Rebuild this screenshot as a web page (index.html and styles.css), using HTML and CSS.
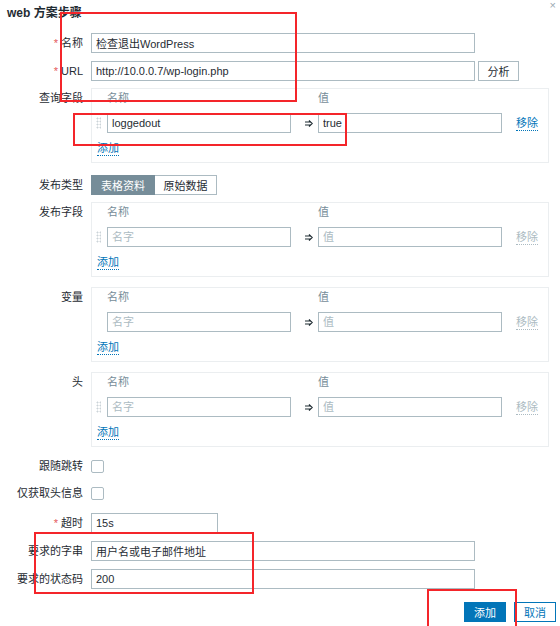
FILE: index.html
```html
<!DOCTYPE html>
<html lang="zh-CN">
<head>
<meta charset="utf-8">
<title>web 方案步骤</title>
<link rel="stylesheet" href="styles.css">
</head>
<body>
<div class="dialog">
  <div class="dialog-head">
    <h2 class="dialog-title">web 方案步骤</h2>
    <span class="dialog-close">×</span>
  </div>

  <div class="form">
    <div class="row">
      <label class="lbl"><span class="req">*</span> 名称</label>
      <div class="ctl"><input class="inp inp-wide" value="检查退出WordPress"></div>
    </div>

    <div class="row gap-8">
      <label class="lbl"><span class="req">*</span> URL</label>
      <div class="ctl ctl-inline"><input class="inp inp-wide" value="http://10.0.0.7/wp-login.php"><button class="btn-alt">分析</button></div>
    </div>

    <div class="row gap-7">
      <label class="lbl">查询字段</label>
      <div class="pairs">
        <div class="pair-head"><span></span><span>名称</span><span></span><span>值</span><span></span></div>
        <div class="pair-row"><span class="drag"></span><input class="inp" value="loggedout"><span class="arrow"><svg width="8" height="7" viewBox="0 0 8 7"><path d="M0 2H6M0 5H6M4 0.5L7.2 3.5L4 6.5" fill="none" stroke="#1f2c33" stroke-width="1.2"/></svg></span><input class="inp" value="true"><a class="link remove">移除</a></div>
        <div class="pair-foot"><a class="link">添加</a></div>
      </div>
    </div>

    <div class="row gap-12">
      <label class="lbl">发布类型</label>
      <div class="ctl"><div class="seg"><button class="seg-btn seg-on">表格资料</button><button class="seg-btn seg-off">原始数据</button></div></div>
    </div>

    <div class="row gap-7">
      <label class="lbl">发布字段</label>
      <div class="pairs">
        <div class="pair-head"><span></span><span>名称</span><span></span><span>值</span><span></span></div>
        <div class="pair-row"><span class="drag"></span><input class="inp" placeholder="名字"><span class="arrow"><svg width="8" height="7" viewBox="0 0 8 7"><path d="M0 2H6M0 5H6M4 0.5L7.2 3.5L4 6.5" fill="none" stroke="#1f2c33" stroke-width="1.2"/></svg></span><input class="inp" placeholder="值"><a class="link link-disabled remove">移除</a></div>
        <div class="pair-foot"><a class="link">添加</a></div>
      </div>
    </div>

    <div class="row gap-10">
      <label class="lbl">变量</label>
      <div class="pairs">
        <div class="pair-head"><span></span><span>名称</span><span></span><span>值</span><span></span></div>
        <div class="pair-row"><span></span><input class="inp" placeholder="名字"><span class="arrow"><svg width="8" height="7" viewBox="0 0 8 7"><path d="M0 2H6M0 5H6M4 0.5L7.2 3.5L4 6.5" fill="none" stroke="#1f2c33" stroke-width="1.2"/></svg></span><input class="inp" placeholder="值"><a class="link link-disabled remove">移除</a></div>
        <div class="pair-foot"><a class="link">添加</a></div>
      </div>
    </div>

    <div class="row gap-10">
      <label class="lbl">头</label>
      <div class="pairs">
        <div class="pair-head"><span></span><span>名称</span><span></span><span>值</span><span></span></div>
        <div class="pair-row"><span class="drag"></span><input class="inp" placeholder="名字"><span class="arrow"><svg width="8" height="7" viewBox="0 0 8 7"><path d="M0 2H6M0 5H6M4 0.5L7.2 3.5L4 6.5" fill="none" stroke="#1f2c33" stroke-width="1.2"/></svg></span><input class="inp" placeholder="值"><a class="link link-disabled remove">移除</a></div>
        <div class="pair-foot"><a class="link">添加</a></div>
      </div>
    </div>

    <div class="row row-check gap-13">
      <label class="lbl">跟随跳转</label>
      <div class="ctl"><input type="checkbox" class="chk"></div>
    </div>

    <div class="row row-check gap-14">
      <label class="lbl">仅获取头信息</label>
      <div class="ctl"><input type="checkbox" class="chk"></div>
    </div>

    <div class="row gap-13">
      <label class="lbl"><span class="req">*</span> 超时</label>
      <div class="ctl"><input class="inp inp-short" value="15s"></div>
    </div>

    <div class="row gap-8">
      <label class="lbl">要求的字串</label>
      <div class="ctl"><input class="inp inp-wide" value="用户名或电子邮件地址"></div>
    </div>

    <div class="row gap-8">
      <label class="lbl">要求的状态码</label>
      <div class="ctl"><input class="inp inp-wide" value="200"></div>
    </div>
  </div>

  <div class="dialog-foot">
    <button class="btn btn-primary">添加</button>
    <button class="btn btn-secondary">取消</button>
  </div>
</div>

<div class="annot annot-1"></div>
<div class="annot annot-2"></div>
<div class="annot annot-3"></div>
<div class="annot annot-4"></div>
</body>
</html>
```

FILE: styles.css
```css
* { box-sizing: border-box; }
html, body { margin: 0; padding: 0; overflow: hidden; }
body {
  width: 560px;
  height: 626px;
  position: relative;
  background: #fff;
  font-family: "Liberation Sans", Arial, "Noto Sans CJK SC", sans-serif;
  font-size: 11px;
  color: #1f2c33;
}

.dialog-head {
  display: flex;
  justify-content: space-between;
  align-items: flex-start;
  padding: 5px 4px 0 7px;
}
.dialog-title {
  margin: 0;
  font-size: 12px;
  font-weight: bold;
  line-height: 16px;
  color: #1f2c33;
}
.dialog-close {
  font-size: 11px;
  line-height: 8px;
  margin-top: -4px;
  color: #9aa9b1;
}

.form {
  margin-top: 12px;
  display: flex;
  flex-direction: column;
}
.row {
  display: grid;
  grid-template-columns: 83px 1fr;
  column-gap: 8px;
  align-items: start;
}
.gap-7 { margin-top: 7px; }
.gap-8 { margin-top: 8px; }
.gap-10 { margin-top: 10px; }
.gap-12 { margin-top: 12px; }
.gap-13 { margin-top: 13px; }
.gap-14 { margin-top: 14px; }

.lbl {
  text-align: right;
  line-height: 20px;
  white-space: nowrap;
}
.row-check .lbl { line-height: 13px; }
.req { color: #e45959; }

.inp {
  height: 20px;
  margin: 0;
  padding: 0 4px;
  border: 1px solid #acbbc2;
  background: #fff;
  font: inherit;
  color: #1f2c33;
  outline: none;
}
.inp::placeholder { color: #acbbc2; opacity: 1; }
.inp-wide { width: 384px; }
.inp-short { width: 127px; }

.ctl-inline { display: flex; gap: 3px; }
.btn-alt {
  width: 41px;
  height: 20px;
  padding: 0;
  border: 1px solid #acbbc2;
  background: #fff;
  font: inherit;
  color: #1f2c33;
}

.pairs {
  width: 458px;
  border: 1px solid #ebeef0;
  padding: 1px 5px 6px;
}
.pair-head, .pair-row {
  display: grid;
  grid-template-columns: 10px 184px 27px 184px 1fr;
  align-items: center;
}
.pair-head {
  line-height: 16px;
  padding-bottom: 7px;
  color: #768d99;
}
.pair-row .inp { width: 184px; }
.arrow {
  display: flex;
  justify-content: flex-end;
  padding-right: 5px;
}
.drag {
  width: 5px;
  height: 12px;
  margin-left: -1px;
  background-image: radial-gradient(circle, #cbd3d8 0.9px, transparent 1.1px);
  background-size: 3px 3px;
}
.pair-foot { margin-top: 8px; display: flex; }

.link {
  display: inline-block;
  line-height: 14px;
  color: #0275b8;
  text-decoration: none;
  border-bottom: 1px dotted #0275b8;
}
.link-disabled { color: #acbbc2; border-bottom-color: #acbbc2; }
.remove { justify-self: start; margin-left: 14px; }

.seg { display: inline-flex; }
.seg-btn {
  height: 20px;
  padding: 0;
  font: inherit;
  border: 1px solid #acbbc2;
  background: #fff;
  color: #1f2c33;
}
.seg-on { width: 64px; background: #768d99; border-color: #768d99; color: #fff; }
.seg-off { width: 62px; border-left: none; }

.chk {
  appearance: none;
  -webkit-appearance: none;
  display: block;
  margin: 0;
  width: 13px;
  height: 13px;
  border: 1px solid #acbbc2;
  border-radius: 2px;
  background: #fff;
}

.dialog-foot {
  margin-top: 13px;
  display: flex;
  justify-content: flex-end;
  gap: 8px;
  padding-right: 4px;
}
.btn {
  width: 42px;
  height: 20px;
  padding: 0;
  font: inherit;
}
.btn-primary { background: #0275b8; border: 1px solid #0275b8; color: #fff; }
.btn-secondary { background: #fff; border: 1px solid #0275b8; color: #0275b8; }

.annot {
  position: absolute;
  border: 2px solid #f4252a;
  pointer-events: none;
}
.annot-1 { left: 60px; top: 12px; width: 237px; height: 90px; }
.annot-2 { left: 73px; top: 113px; width: 274px; height: 33px; }
.annot-3 { left: 34px; top: 532px; width: 220px; height: 62px; }
.annot-4 { left: 427px; top: 589px; width: 90px; height: 60px; }
```
